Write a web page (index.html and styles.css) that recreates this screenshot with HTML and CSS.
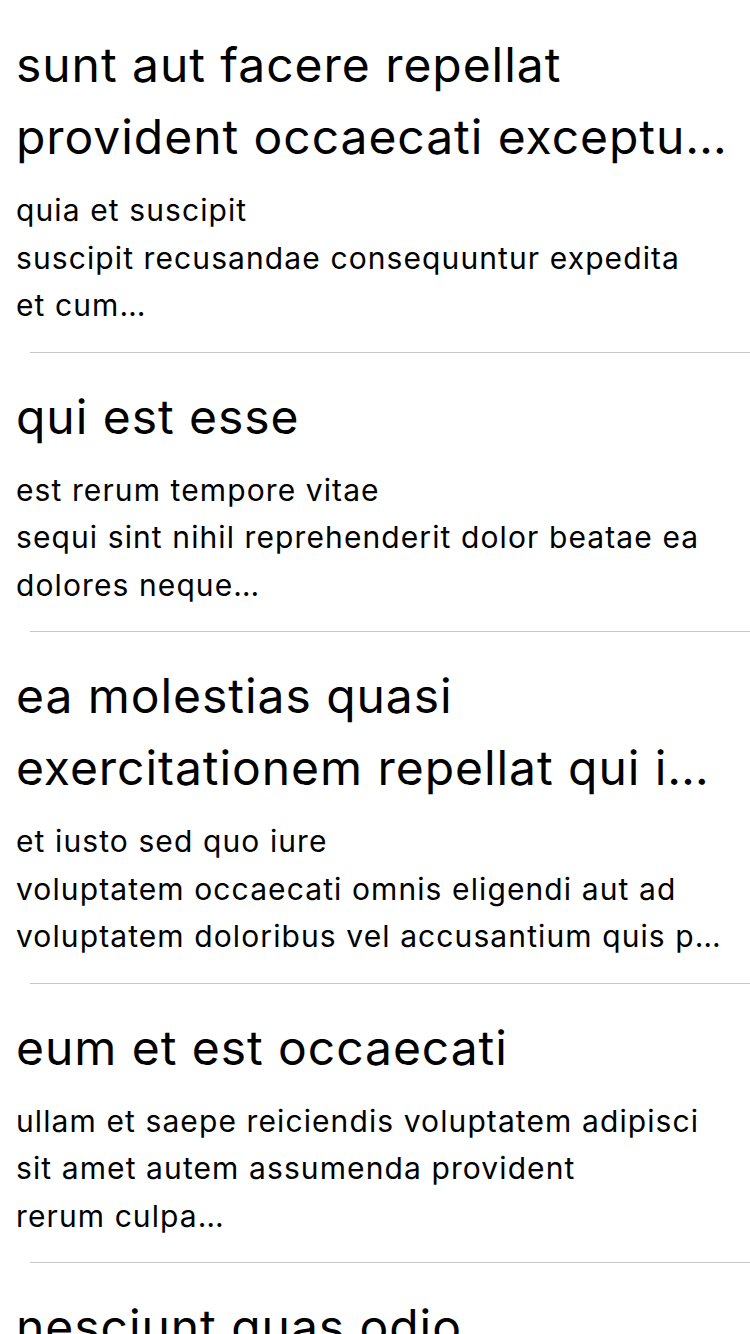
FILE: index.html
```html
<!DOCTYPE html>
<html lang="en">
<head>
<meta charset="utf-8">
<title>Posts</title>
<link rel="stylesheet" href="styles.css">
</head>
<body>
<ul class="post-list">
  <li class="post">
    <h2 class="post-title"><span class="line">sunt aut facere repellat</span><span class="line">provident occaecati exceptu…</span></h2>
    <p class="post-body"><span class="line">quia et suscipit</span><span class="line">suscipit recusandae consequuntur expedita</span><span class="line">et cum…</span></p>
  </li>
  <li class="post">
    <h2 class="post-title"><span class="line">qui est esse</span></h2>
    <p class="post-body"><span class="line">est rerum tempore vitae</span><span class="line">sequi sint nihil reprehenderit dolor beatae ea</span><span class="line">dolores neque…</span></p>
  </li>
  <li class="post">
    <h2 class="post-title"><span class="line">ea molestias quasi</span><span class="line">exercitationem repellat qui i…</span></h2>
    <p class="post-body"><span class="line">et iusto sed quo iure</span><span class="line">voluptatem occaecati omnis eligendi aut ad</span><span class="line">voluptatem doloribus vel accusantium quis p…</span></p>
  </li>
  <li class="post">
    <h2 class="post-title"><span class="line">eum et est occaecati</span></h2>
    <p class="post-body"><span class="line">ullam et saepe reiciendis voluptatem adipisci</span><span class="line">sit amet autem assumenda provident</span><span class="line">rerum culpa…</span></p>
  </li>
  <li class="post">
    <h2 class="post-title"><span class="line">nesciunt quas odio</span></h2>
    <p class="post-body"><span class="line">repudiandae veniam quaerat sunt sed</span><span class="line">alias aut fugiat sit autem sed est</span><span class="line">voluptatem omnis possimus…</span></p>
  </li>
</ul>
</body>
</html>
```

FILE: styles.css
```css
* { box-sizing: border-box; }
html, body {
  margin: 0;
  padding: 0;
  background: #ffffff;
}
body {
  font-family: Inter, "Noto Sans", sans-serif;
  color: #000000;
  width: 750px;
  height: 1334px;
  overflow: hidden;
}
.post-list {
  list-style: none;
  margin: 0;
  padding: 1px 0 0 0;
}
.post {
  display: flex;
  flex-direction: column;
  padding: 28px 0 0 0;
}
.post::after {
  content: "";
  display: block;
  height: 1px;
  margin: 22px 0 0 30px;
  background: #c8c7cc;
}
.post-title {
  margin: 0;
  padding: 0 16px;
  font-size: 48px;
  font-weight: 400;
  line-height: 72px;
  letter-spacing: 0.95px;
}
.post-body {
  margin: 14px 0 0 0;
  padding: 0 16px;
  font-size: 30px;
  font-weight: 400;
  line-height: 47.5px;
  letter-spacing: 1.1px;
}
.line {
  display: block;
  white-space: nowrap;
}
```
